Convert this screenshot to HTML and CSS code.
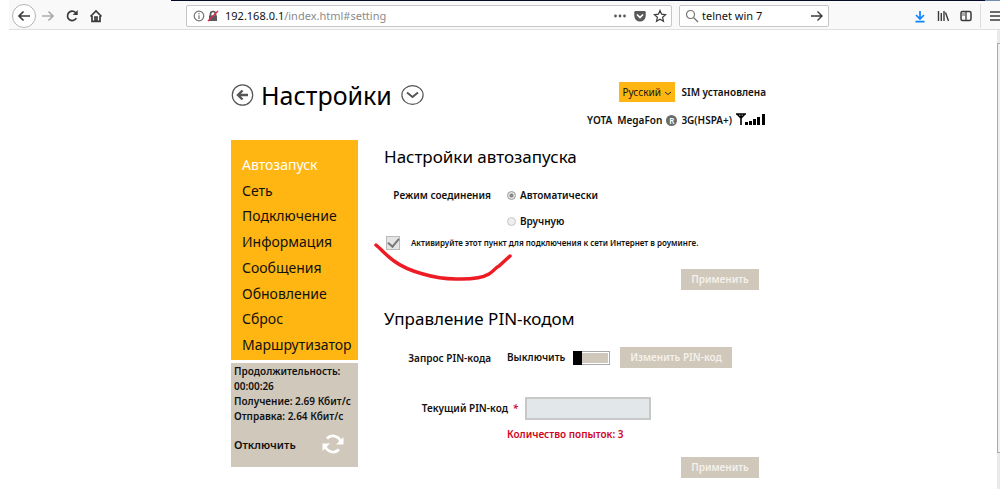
FILE: index.html
```html
<!DOCTYPE html>
<html lang="ru">
<head>
<meta charset="utf-8">
<title>Настройки</title>
<link rel="stylesheet" href="styles.css">
</head>
<body>
<header class="toolbar">
  <button class="tool tool-back" aria-label="Назад"><svg width="16" height="16" viewBox="0 0 16 16"><path d="M14 8H3M7.500 3.500L3 8l4.500 4.500"/></svg></button>
  <button class="tool tool-faded" aria-label="Вперёд"><svg width="16" height="16" viewBox="0 0 16 16"><path d="M2 8h11M8.500 3.500L13 8l-4.500 4.500"/></svg></button>
  <button class="tool" aria-label="Обновить"><svg width="16" height="16" viewBox="0 0 16 16"><path d="M12.300 10.200A4.700 4.700 0 1 1 11.500 4.500l1.500 1.700"/><path d="M13.700 2v5H8.700z" fill="#3b3b3d" stroke="none"/></svg></button>
  <button class="tool" aria-label="Домой"><svg width="16" height="16" viewBox="0 0 16 16"><path d="M2.500 8.500L8 3l5.500 5.500M4 8v5.300h8V8"/><path d="M7 9h2v4H7z"/></svg></button>
  <div class="address">
    <svg width="12" height="12" viewBox="0 0 12 12" class="thin"><circle cx="6" cy="6" r="4.800"/><path d="M6 5.300V9M6 3v1.200"/></svg>
    <svg width="12" height="12" viewBox="0 0 12 12"><path d="M2 5.500h8V11H2z" fill="#59595b" stroke="none"/><path d="M3.500 6V4a2.500 2.500 0 0 1 5 0v2" stroke="#59595b"/><path d="M1 11L11 1" stroke="#e22850" stroke-width="1.500"/></svg>
    <span class="url"><b>192.168.0.1</b>/index.html#setting</span>
    <svg width="14" height="14" viewBox="0 0 14 14"><g fill="#59595b" stroke="none"><circle cx="2.500" cy="7" r="1.400"/><circle cx="7" cy="7" r="1.400"/><circle cx="11.500" cy="7" r="1.400"/></g></svg>
    <svg width="14" height="14" viewBox="0 0 14 14"><path d="M2.500 2h9q1.200 0 1.200 1.200V7A5.700 5.500 0 0 1 1.300 7V3.200Q1.300 2 2.500 2z" fill="#59595b" stroke="none"/><path d="M4 5.500l3 3 3-3" stroke="#fff"/></svg>
    <svg width="14" height="14" viewBox="0 0 14 14"><path d="M7 1.500l1.600 3.700 4 .4-3 2.700.9 4L7 10.200l-3.500 2.100.9-4-3-2.700 4-.4z" stroke-width="1.200"/></svg>
  </div>
  <form class="search">
    <svg width="14" height="14" viewBox="0 0 14 14" class="thin"><circle cx="5.500" cy="5.500" r="4"/><path d="M8.500 8.500L13 13"/></svg>
    <input class="search-input" aria-label="Поиск" value="telnet win 7">
    <button type="button" class="tool-small" aria-label="Найти"><svg width="14" height="14" viewBox="0 0 14 14"><path d="M1 7h11M7.500 2.500L12 7l-4.500 4.500" stroke-width="1.400"/></svg></button>
  </form>
  <div class="tools-end">
    <button class="tool-small" aria-label="Загрузки"><svg width="12" height="14" viewBox="0 0 12 14" class="blue"><path d="M6 2v7M2 6l4 4 4-4M1.500 12.700h9"/></svg></button>
    <button class="tool-small" aria-label="Библиотека"><svg width="12" height="14" viewBox="0 0 12 14"><path d="M1.500 2v10M4.300 4v8M7 2v10M8.500 3.500l3 8.500" stroke-width="1.400"/></svg></button>
    <button class="tool-small" aria-label="Боковая панель"><svg width="12" height="14" viewBox="0 0 12 14"><rect x="1" y="2.500" width="10" height="9" rx="1.500" stroke-width="1.500"/><path d="M6 3v8" stroke-width="1.300"/><path d="M2 3.500h3V7H2z" fill="#aaa" stroke="none"/></svg></button>
  </div>
  <button class="menu-button" aria-label="Меню"><svg width="10" height="14" viewBox="0 0 10 14"><path d="M0 3h10M0 7h10M0 11h10"/></svg></button>
</header>

<div class="viewport">
  <main class="page">
    <div class="head">
      <div class="title-row">
        <button class="round" aria-label="Назад"><svg width="23" height="22" viewBox="0 0 23 22"><circle cx="11.500" cy="11" r="10.200" stroke-width="1.200"/><path d="M17 11H8M11.500 6.500L7 11l4.500 4.500" stroke-width="2.400"/></svg></button>
        <h1>Настройки</h1>
        <button class="round" aria-label="Развернуть"><svg width="23" height="22" viewBox="0 0 23 22"><ellipse cx="11.500" cy="11" rx="10.600" ry="9.400" stroke-width="1.200"/><path d="M6 8.500l5.500 4.500L17 8.500" stroke-width="2"/></svg></button>
      </div>
      <div class="state">
        <div class="state-row">
          <div class="lang">
            <select class="lang-select" aria-label="Язык"><option>Русский</option></select>
            <svg class="lang-arrow" width="8" height="8" viewBox="0 0 8 8"><path d="M1 3l3 2.500L7 3" stroke="#222" stroke-width="1"/></svg>
          </div>
          <span>SIM установлена</span>
        </div>
        <div class="state-row state-net">
          <span>YOTA</span><span>MegaFon</span><span class="roam">R</span><span>3G(HSPA+)</span>
          <svg width="30" height="14" viewBox="0 0 30 14"><path d="M0 1h10M1 1l4 4 4-4M5 1v11" stroke="#000" stroke-width="1.600"/><path d="M9 9h3v3H9zM13 8h3v4h-3zM17 6h3v6h-3zM21 4h3v8h-3zM26 1h3v11h-3z" fill="#000" stroke="none"/></svg>
        </div>
      </div>
    </div>

    <div class="columns">
      <aside class="side">
        <nav class="nav">
          <a class="active" href="#setting">Автозапуск</a>
          <a href="#network">Сеть</a>
          <a href="#connection">Подключение</a>
          <a href="#info">Информация</a>
          <a href="#messages">Сообщения</a>
          <a href="#update">Обновление</a>
          <a href="#reset">Сброс</a>
          <a href="#router">Маршрутизатор</a>
        </nav>
        <div class="session">
          <p>Продолжительность:<br>00:00:26</p>
          <p>Получение: 2.69 Кбит/с</p>
          <p>Отправка: 2.64 Кбит/с</p>
          <button class="disconnect">Отключить
            <svg width="22" height="22" viewBox="0 0 22 22"><g stroke="#fff" stroke-width="2.800"><path d="M5 5.500A8.200 8.200 0 0 1 18.800 9"/><path d="M17 16.500A8.200 8.200 0 0 1 3.200 13"/></g><path d="M21.500 4v7.500H14zM.5 18v-7.500H8z" fill="#fff" stroke="none"/></svg>
          </button>
        </div>
      </aside>

      <div class="content">
        <form class="section">
          <h2>Настройки автозапуска</h2>
          <div class="row" role="radiogroup" aria-labelledby="mode">
            <span class="label" id="mode">Режим соединения</span>
            <div class="choices">
              <label class="choice"><input class="radio" type="radio" name="mode" checked>Автоматически</label>
              <label class="choice"><input class="radio" type="radio" name="mode">Вручную</label>
            </div>
          </div>
          <label class="roaming"><input class="check" type="checkbox" checked>Активируйте этот пункт для подключения к сети Интернет в роуминге.</label>
          <button type="button" class="button apply">Применить</button>
          <svg class="mark" width="142" height="46" viewBox="0 0 142 46"><path d="M3 5C9 10 15 17 21 21C29 27 39 31 50 34C60 37 71 39 83 39C91 39 106 40 116 34C121 31 122 28 126 26L137 16" stroke="#ed1c24" stroke-width="3.500" stroke-linecap="round"/></svg>
        </form>
        <form class="section section-pin">
          <h2>Управление PIN-кодом</h2>
          <div class="row row-switch">
            <label class="label" for="pin-on">Запрос PIN-кода</label>
            <div class="switch-line"><span class="off">Выключить</span><input class="switch" id="pin-on" type="checkbox" role="switch"><button type="button" class="button change">Изменить PIN-код</button></div>
          </div>
          <div class="pin-line">
            <label class="pin-label" for="pin">Текущий PIN-код <em>*</em></label>
            <input class="pin" id="pin" type="password">
          </div>
          <p class="attempts">Количество попыток: 3</p>
          <button type="button" class="button apply">Применить</button>
        </form>
      </div>
    </div>
  </main>
  <div class="scrollbar"><div class="thumb"></div></div>
</div>
</body>
</html>
```
FILE: styles.css
```css
* { box-sizing: border-box; }
body {
  margin: 0;
  min-height: 100vh;
  display: flex;
  flex-direction: column;
  background: #fff;
  color: #111;
  font: 600 10px/15px "Noto Sans", "Open Sans", sans-serif;
}
h1, h2, p { margin: 0; }
button, input, select { font: inherit; color: inherit; margin: 0; }
button { border: 0; padding: 0; background: none; }
svg { display: block; flex: none; fill: none; stroke: #3b3b3d; stroke-width: 1.7px; }
svg.thin { stroke: #737375; stroke-width: 1.2px; }
svg.blue { stroke: #0a84ff; }

.toolbar {
  display: flex;
  align-items: center;
  height: 30px;
  margin-left: 9px;
  padding: 2px 0 0 3px;
  background: linear-gradient(90deg, transparent 162px, #080a2c 162px, #080a2c calc(100% - 15px), #6f8db0 calc(100% - 15px)) top / 100% 1px no-repeat, #f9f9fa;
  border-bottom: 1px solid #e0e0e1;
}
.tool { display: flex; align-items: center; justify-content: center; width: 24px; height: 24px; }
.tool-back { border: 1px solid #b5b5b6; border-radius: 50%; background: #fff; }
.tool-faded { opacity: 0.4; }
.address, .search {
  display: flex;
  align-items: center;
  height: 22px;
  background: #fff;
  border: 1px solid #c6c6c7;
  border-radius: 2px;
}
.address { flex: 1; gap: 6px; margin-left: 78px; padding: 0 4px 0 6px; font: 400 11px/16px "Noto Sans", "Open Sans", sans-serif; }
.address .thin + svg { margin-left: -4px; }
.url { flex: 1; color: #8a8a8c; }
.url b { font-weight: 400; color: #111; }
.search { width: 150px; gap: 3px; margin-left: 7px; padding: 0 4px 0 5px; }
.search-input { flex: 1; min-width: 0; border: 0; padding: 0; background: none; font: 400 11px/16px "Noto Sans", "Open Sans", sans-serif; }
.tools-end { display: flex; gap: 11px; margin-left: 85px; padding-right: 8px; }
.menu-button { padding-left: 9px; border-left: 1px solid #dddddf; height: 24px; }

.viewport { flex: 1; display: flex; }
.page { flex: 1; max-width: 535px; margin: 0 auto; padding: 50px 0 10px; }
.scrollbar { width: 3px; background: #eaeaea; padding-top: 13px; }
.thumb { height: 410px; border: 1px solid #aaa; border-right: 0; background: #f0f0f0; }

.head { display: flex; justify-content: space-between; height: 60px; }
.title-row { display: flex; align-items: center; gap: 7px; height: 30px; }
h1 { font: 400 25px/30px "Noto Sans", "Open Sans", sans-serif; color: #000; }
.title-row h1 + .round { margin-left: 2px; }
.round svg { stroke: #555; }
.state { display: flex; flex-direction: column; align-items: flex-end; gap: 10px; padding-top: 2px; }
.state-row { display: flex; align-items: center; gap: 7px; height: 20px; }
.state-net { gap: 4px; height: 16px; }
.state-net span:first-child { margin-right: 1px; }
.lang { position: relative; }
.lang-select { display: block; appearance: none; width: 56px; height: 20px; padding: 0 0 0 4px; border: 0; border-radius: 0; background: #ffb612; font-weight: 400; }
.lang-arrow { position: absolute; right: 3px; top: 7px; pointer-events: none; }
.roam { width: 11px; height: 11px; border-radius: 50%; background: #6b6b6b; color: #fff; font-size: 8px; line-height: 11px; text-align: center; }

.columns { display: flex; gap: 26px; }
.side { flex: none; width: 127px; }
.nav { display: flex; flex-direction: column; justify-content: space-between; min-height: 220px; padding: 12px 0 3px 11px; background: #ffb612; font: 400 14px/25px "Noto Sans", "Open Sans", sans-serif; }
.nav a { color: #111; text-decoration: none; white-space: nowrap; }
.nav .active { color: #fff; }
.session { margin-top: 3px; padding: 1px 3px 12px; background: #d0c8bb; white-space: nowrap; }
.disconnect { display: flex; align-items: center; justify-content: space-between; width: 100%; margin-top: 9px; padding-right: 11px; font-size: 11px; }

.content { flex: 1; }
.section { position: relative; display: flex; flex-direction: column; padding-right: 7px; }
.section-pin { padding-top: 12px; }
h2 { font: 400 17px/24px "Noto Sans", "Open Sans", sans-serif; color: #000; padding-top: 5px; }
.row { display: grid; grid-template-columns: 107px 1fr; column-gap: 16px; margin-top: 18px; white-space: nowrap; }
.label { text-align: right; line-height: 16px; }
.choices { display: flex; flex-direction: column; gap: 10px; }
.choice { display: flex; align-items: center; gap: 4px; height: 16px; }
.radio { appearance: none; width: 9px; height: 9px; border: 1px solid #c4c4c4; border-radius: 50%; background: #eee; }
.radio:checked { border-color: #999; background: radial-gradient(#888 30%, #e6e6e6 50%); }
.roaming { display: flex; align-items: center; gap: 11px; margin-top: 6px; padding-left: 2px; font-size: 8px; white-space: nowrap; }
.check { appearance: none; width: 14px; height: 14px; border: 1px solid #bbb; background: #e4e4e4; display: grid; place-items: center; }
.check:checked::before { content: ""; width: 5px; height: 9px; margin-top: -2px; border: solid #777; border-width: 0 2px 2px 0; transform: rotate(40deg); }
.button { height: 21px; padding: 0; background: #d0c8bb; color: #f4f1ec; }
.apply { align-self: flex-end; width: 78px; margin-top: 19px; }
.change { width: 112px; }
.mark { position: absolute; left: -11px; top: 100px; pointer-events: none; }
.row-switch { align-items: center; margin-top: 16px; }
.switch-line { display: flex; align-items: center; gap: 10px; }
.off { width: 56px; }
.switch { appearance: none; width: 37px; height: 14px; background: #d0c8bb; box-shadow: inset 0 0 0 1px #aaa, inset 0 0 0 2px #fff; }
.switch::before { content: ""; display: block; width: 9px; height: 14px; background: #000; }
.switch:checked::before { margin-left: 28px; }
.pin-line { display: flex; align-items: center; gap: 7px; margin-top: 29px; }
.pin-label { width: 134px; text-align: right; white-space: nowrap; }
.pin-label em { color: #d0021b; margin-left: 2px; }
.pin { width: 126px; height: 23px; border: 2px solid #c8c8c8; background: #e2e7ea; }
.attempts { margin-top: 7px; padding-left: 123px; color: #d0021b; }
.attempts + .apply { margin-top: 15px; }
```
